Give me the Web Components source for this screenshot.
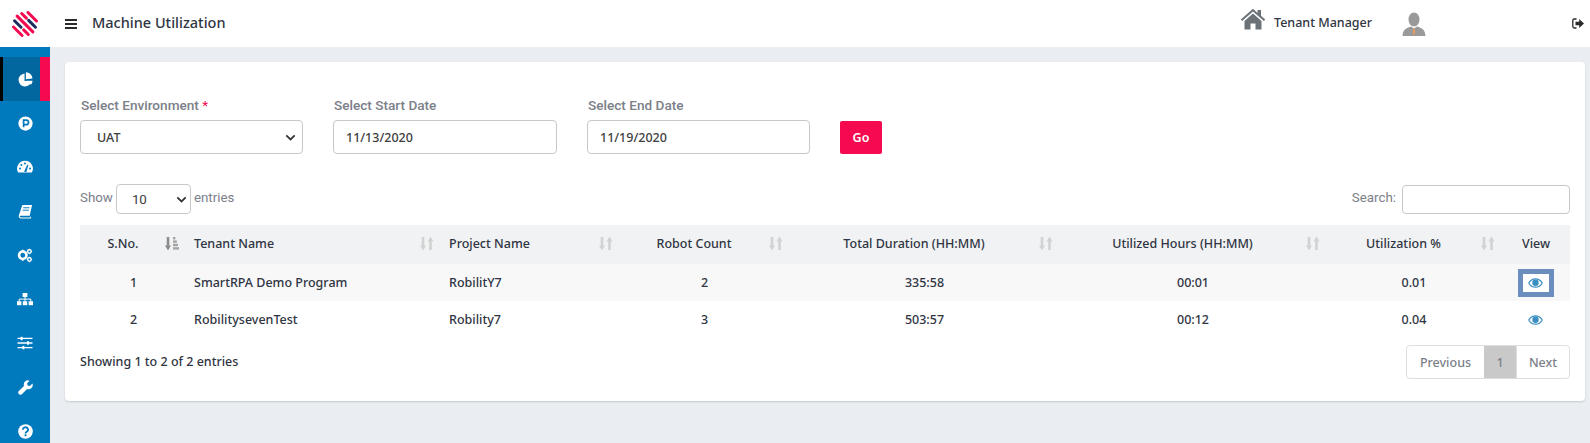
<!DOCTYPE html>
<html><head><meta charset="utf-8">
<style>
html,body{margin:0;padding:0;height:443px;overflow:hidden;background:#eaeef3;font-family:"Noto Sans",sans-serif;}
</style></head><body>
<app-shell>
  <top-bar slot="top" heading="Machine Utilization" tenant="Tenant Manager"></top-bar>
  <side-bar slot="side"></side-bar>
  <filter-card>
    <filter-form></filter-form>
    <data-table></data-table>
  </filter-card>
</app-shell>
<script>
function def(name, css, html){
  customElements.define(name, class extends HTMLElement{
    constructor(){super();const r=this.attachShadow({mode:'open'});r.innerHTML='<style>'+css+'</style>'+(typeof html==='function'?html(this):html);}
  });
}
const chevron='<svg viewBox="0 0 12 8" width="11" height="7"><path d="M1.200 1.500 6 6.200 10.800 1.500" fill="none" stroke="#333" stroke-width="2"/></svg>';
const sidebarIcons=[
 '<svg viewBox="0 0 16 16" width="15" height="15"><path d="M7 1.500A7 7 0 1 0 14.500 9.600H7Z" fill="#fff"/><path d="M8.400 .4A7 7 0 0 1 15.500 6.800L8.400 7.800Z" fill="#fff"/><path d="M9 9.200H15.500A7 7 0 0 1 13.800 13.600Z" fill="#fff"/></svg>',
 '<svg viewBox="0 0 16 16" width="15" height="15"><circle cx="8" cy="8" r="7.600" fill="#fff"/><path d="M6 12V4.400h2.800a2.300 2.300 0 0 1 0 4.800H6" fill="none" stroke="#0079bd" stroke-width="1.800"/></svg>',
 '<svg viewBox="0 0 16 14" width="16" height="14"><path d="M8 .8A7.800 7.800 0 0 0 1.200 12.600H14.800A7.800 7.800 0 0 0 8 .8Z" fill="#fff"/><g fill="#0079bd"><circle cx="8" cy="3.400" r="1"/><circle cx="4.400" cy="5" r="1"/><circle cx="3" cy="8.600" r="1"/><circle cx="13" cy="8.600" r="1"/><path d="M7 11.800 10.400 4.600 11.400 5 9.400 12Z"/></g></svg>',
 '<svg viewBox="0 0 16 16" width="15" height="15"><path d="M4.600 1H15l-2.600 11.400H3.200c-.9 0-1.300.5-1.300 1s.4.9 1.200.9h9.800l.3-.9.9.4-.5 1.600H2.800C1.400 15 .6 14 .8 12.600Z" fill="#fff"/><path d="M5.600 4h6.600M5 6.600h6.600" stroke="#0079bd" stroke-width="1"/></svg>',
 '<svg viewBox="0 0 18 16" width="16" height="15"><path d="M6.500 3.600a4.200 4.200 0 1 0 0 8.400 4.200 4.200 0 0 0 0-8.400Z" fill="none" stroke="#fff" stroke-width="2.800"/><path d="M6.500 1.600v2M6.500 12v2M1.600 7.800h2M9.400 7.800h2M3 4.300l1.400 1.400M8.600 9.900 10 11.300M3 11.300l1.400-1.400M8.600 5.700 10 4.300" stroke="#fff" stroke-width="2"/><circle cx="14" cy="3.500" r="2" fill="none" stroke="#fff" stroke-width="1.600"/><circle cx="14" cy="12.500" r="2" fill="none" stroke="#fff" stroke-width="1.600"/><path d="M14 .4v1M14 5.600v1M11 3.500h1M16 3.500h1M14 9.400v1M14 14.600v1M11 12.500h1M16 12.500h1" stroke="#fff" stroke-width="1.100"/></svg>',
 '<svg viewBox="0 0 16 14" width="16" height="14"><g fill="#fff"><rect x="5.600" y="1" width="4.800" height="4"/><rect x="0" y="9.200" width="4.400" height="4"/><rect x="5.800" y="9.200" width="4.400" height="4"/><rect x="11.600" y="9.200" width="4.400" height="4"/></g><path d="M8 5v4.200M2.200 9.200V7.100h11.600v2.100" fill="none" stroke="#fff" stroke-width="1"/></svg>',
 '<svg viewBox="0 0 16 14" width="16" height="14"><path d="M.5 2.400h15M.5 7h15M.5 11.600h15" stroke="#fff" stroke-width="1.300"/><rect x="3.600" y=".8" width="2" height="3.400" fill="#fff"/><rect x="10" y="5.300" width="2" height="3.400" fill="#fff"/><rect x="5.400" y="9.900" width="2" height="3.400" fill="#fff"/></svg>',
 '<svg viewBox="0 0 16 16" width="15" height="15"><path d="M15.400 3.800 12.700 6.400l-2.400-.6-.6-2.400L12.300 .8A4.400 4.400 0 0 0 6.400 6.300L.9 11.800a2.300 2.300 0 0 0 3.200 3.300L9.700 9.500a4.400 4.400 0 0 0 5.700-5.700Z" fill="#fff"/></svg>',
 '<svg viewBox="0 0 16 16" width="15" height="15"><circle cx="8" cy="8" r="7.800" fill="#fff"/><path d="M5.300 6.100A2.700 2.500 0 1 1 9.300 8.200C8.400 8.700 8 9.100 8 10" fill="none" stroke="#0079bd" stroke-width="1.900"/><rect x="7" y="11" width="2" height="2" fill="#0079bd"/></svg>'
];
def('app-shell',
 ':host{display:grid;grid-template-columns:50px 1fr;grid-template-rows:47px 1fr;height:443px;width:1590px;overflow:hidden}'+
 '::slotted([slot=top]){grid-column:1/3}main{padding:15px 5px 0 15px;min-width:0}',
 '<slot name="top"></slot><slot name="side"></slot><main><slot></slot></main>');
def('top-bar',
 ':host{display:flex;align-items:center;background:#fff;height:47px;color:#2f3542;font-size:14px}'+
 '.logo{width:50px;box-sizing:border-box;padding-right:1px;display:flex;justify-content:center}'+
 '.menu{margin-left:15px;width:12px;height:10px;border-top:2px solid #2b2b2b;border-bottom:2px solid #2b2b2b;position:relative;box-sizing:border-box}'+
 '.menu:after{content:"";position:absolute;left:0;right:0;top:2px;height:2px;background:#2b2b2b}'+
 '.t{margin:-3px 0 0 15px;font-size:14.500px;font-weight:500}'+
 '.sp{flex:1}.home{margin:-9px 8px 0 0;display:block}.n{font-size:12.500px;font-weight:500;margin:-2px 30px 0 0}'+
 '.u{display:block;margin-right:146px}.out{display:block;margin-right:6px}',
 h=>`<div class="logo"><svg width="26" height="26" viewBox="0 0 28 28"><g transform="rotate(45 14 14)" stroke-width="3.200" stroke-linecap="round" fill="none">
 <path d="M7.500 3H20.500M3.500 8.500H10.500M2 14H26M17.500 19.500H24.500M7.500 25H20.500" stroke="#f5094f"/><path d="M14 8.500H24.500M3.500 19.500H13.500" stroke="#1d2c5e"/></g></svg></div>
 <span class="menu"></span><span class="t">${h.getAttribute('heading')}</span><span class="sp"></span>
 <svg class="home" width="26" height="22" viewBox="0 0 26 22"><path d="M13 .8 .8 11.500l1.300 1.500L13 3.500l10.900 9.500 1.300-1.500-4.200-3.700V2h-3.500v2.900Z" fill="#6b7378"/><path d="M13 5.500 4.500 13v8.500h6v-6h5v6h6V13Z" fill="#6b7378"/></svg>
 <span class="n">${h.getAttribute('tenant')}</span>
 <svg class="u" width="24" height="24" viewBox="0 0 24 24"><ellipse cx="12" cy="7.500" rx="5.500" ry="7" fill="#999"/><path d="M.5 24C1 18 3 16.500 9 14.500l3 2 3-2c6 2 8 3.500 8.500 9.500Z" fill="#9a9a9a"/><path d="M11.300 16.500h1.400l.8 3.500-1.500 4-1.300-4Z" fill="#d99a63"/></svg>
 <svg class="out" width="12" height="11" viewBox="0 0 12 11"><path d="M4.500 1H2.300C1.400 1 .8 1.600 .8 2.500v6C.8 9.400 1.400 10 2.300 10h2.200" fill="none" stroke="#2b2b2b" stroke-width="1.300"/><path d="M3.500 3.700h3.700V1L12 5.500 7.200 10V7.300H3.500Z" fill="#2b2b2b"/></svg>`);
def('side-item',
 ':host{display:flex;align-items:center;justify-content:center;height:44px;box-sizing:border-box}'+
 ':host([active]){background:#02669f;border-left:3px solid #000;border-right:10px solid #f5094f;padding-left:7px}',
 '<slot></slot>');
def('side-bar',
 ':host{display:block;background:#0079bd;padding-top:10px;height:396px;overflow:hidden}',
 sidebarIcons.map((s,i)=>`<side-item ${i==0?'active':''}>${s}</side-item>`).join(''));
def('filter-card',
 ':host{display:block;background:#fff;border-radius:4px;box-shadow:0 1px 2px rgba(0,0,0,.16);height:339px;box-sizing:border-box;padding:34px 15px 0}',
 '<slot></slot>');
def('form-field',
 ':host{display:flex;flex-direction:column;color:#7b8089;font:500 13.600px Roboto,sans-serif}'+
 'label{height:24px;line-height:19px;padding-left:1px;white-space:nowrap}b{color:#f5094f;font-weight:400}'+
 '.box{height:34px;box-sizing:border-box;border:1px solid #c8c8c8;border-radius:4px;display:flex;align-items:center;justify-content:space-between;color:#3d3d3d;font:500 12.500px "Noto Sans",sans-serif;padding:0 12px}'+
 ':host([sel]) .box{padding:0 6px 0 16px}',
 h=>`<label>${h.getAttribute('label')}${h.hasAttribute('req')?' <b>*</b>':''}</label><div class="box"><span>${h.getAttribute('value')}</span>${h.hasAttribute('sel')?chevron:''}</div>`);
def('filter-form',
 ':host{display:grid;grid-template-columns:223px 224px 223px 42px;column-gap:30px;align-items:end}'+
 'button{all:unset;box-sizing:border-box;display:flex;align-items:center;justify-content:center;height:33px;background:#f5094f;border-radius:2px;color:#fff;font:600 12.500px "Noto Sans",sans-serif}',
 `<form-field sel req label="Select Environment" value="UAT"></form-field>
  <form-field label="Select Start Date" value="11/13/2020"></form-field>
  <form-field label="Select End Date" value="11/19/2020"></form-field>
  <button>Go</button>`);
const sortBoth='<svg class="s" width="14" height="15" viewBox="0 0 14 15"><g fill="#d2d2d2"><path d="M0 9.500 3 14.500 6 9.500Z"/><rect x="1.700" y="1" width="2.600" height="9"/><path d="M7.500 5.500 10.500 .5 13.500 5.500Z"/><rect x="9.200" y="5" width="2.600" height="9"/></g></svg>';
const sortAsc='<svg class="s" width="14" height="15" viewBox="0 0 14 15"><path d="M0 9.500 3 14.500 6 9.500Z" fill="#8c8c8c"/><rect x="1.700" y="1" width="2.600" height="9" fill="#8c8c8c"/><g fill="#a4a4a4"><rect x="8" y="1" width="2.400" height="2.400"/><rect x="8" y="4.400" width="3.800" height="2.400"/><rect x="8" y="7.800" width="5" height="2.400"/><rect x="8" y="11.200" width="6" height="2.400"/></g></svg>';
const eye='<svg width="15" height="10" viewBox="0 0 15 10"><path d="M7.500 .8C4.400.8 2 2.700 .8 5c1.200 2.300 3.600 4.200 6.700 4.200s5.500-1.900 6.700-4.200C13 2.700 10.600.8 7.500.8Z" fill="none" stroke="#3a8fc0" stroke-width="1.200"/><circle cx="7.500" cy="4.800" r="3.200" fill="#3a8fc0"/></svg>';
const cols=[['S.No.',104,'c',1],['Tenant Name',255,'l',0],['Project Name',179,'l',0],['Robot Count',170,'c',0],['Total Duration (HH:MM)',270,'c',0],['Utilized Hours (HH:MM)',267,'c',0],['Utilization %',175,'c',0],['View',70,'v',0]];
const rows=[['1','SmartRPA Demo Program','RobilitY7','2','335:58','00:01','0.01'],['2','RobilitysevenTest','Robility7','3','503:57','00:12','0.04']];
def('data-table',
 ':host{display:block;margin-top:30px;color:#2f3542;font:500 12.500px "Noto Sans",sans-serif}'+
 '.bar{display:flex;justify-content:space-between;align-items:center;height:30px;margin-bottom:11px;color:#7b8089;font:400 13.330px Roboto,sans-serif}'+
 '.lift{margin-top:-3px}.len{display:flex;align-items:center;gap:3px}.mini{width:75px;height:30px;box-sizing:border-box;border:1px solid #c8c8c8;border-radius:4px;display:flex;align-items:center;justify-content:space-between;padding:0 3px 0 15px;color:#3d3d3d}'+
 '.search{display:flex;align-items:center;gap:6px}.input{width:168px;height:29px;box-sizing:border-box;border:1px solid #c8c8c8;border-radius:4px}'+
 'table{border-collapse:collapse;table-layout:fixed;width:1490px}'+
 'th{font-weight:500;height:39px;padding:0 29px 2px 11px;position:relative;background:#f1f2f4;box-sizing:border-box}th.l{padding-left:10px}'+
 'td{height:37px;padding:0 10px;box-sizing:border-box}td.c{padding:0 8.500px 0 11.500px}'+
 'tr.o td{background:#f8f8f9}.c{text-align:center}.l{text-align:left}th.v{text-align:center;padding:0 9px 2px 11px}'+
 '.s{position:absolute;right:5px;top:11px}'+
 '.cell{display:flex;align-items:center;justify-content:center;padding-left:1px}'+
 '.focus{display:flex;align-items:center;justify-content:center;width:36px;height:28px;box-sizing:border-box;border:5px solid #6c8ebf;background:#fff}'+
 '.foot{display:flex;justify-content:space-between;align-items:center;margin-top:7px;height:34px}.foot>span{margin-top:-2px}'+
 '.pg{display:flex;height:34px;box-sizing:border-box;border:1px solid #dedede;border-radius:4px;color:#7b8089;overflow:hidden}'+
 '.pg span{display:flex;align-items:center;justify-content:center}.pg .p{width:77px}.pg .n{width:52px}.pg .a{width:33px;background:#c9c9c9;border-right:1px solid #dedede;box-sizing:border-box}',
 `<div class="bar"><div class="len"><span class="lift">Show</span><div class="mini"><span>10</span>${chevron}</div><span class="lift">entries</span></div><div class="search"><span class="lift">Search:</span><div class="input"></div></div></div>
 <table><colgroup>${cols.map(c=>`<col style="width:${c[1]}px">`).join('')}</colgroup>
 <thead><tr>${cols.map(c=>`<th class="${c[2]}">${c[0]}${c[2]==='v'?'':(c[3]?sortAsc:sortBoth)}</th>`).join('')}</tr></thead>
 <tbody>${rows.map((r,i)=>`<tr class="${i==0?'o':''}">${r.map((v,j)=>`<td class="${cols[j][2]}">${v}</td>`).join('')}<td><div class="cell">${i==0?`<span class="focus">${eye}</span>`:eye}</div></td></tr>`).join('')}</tbody></table>
 <div class="foot"><span>Showing 1 to 2 of 2 entries</span><div class="pg"><span class="p">Previous</span><span class="a">1</span><span class="n">Next</span></div></div>`);
</script>
</body></html>
